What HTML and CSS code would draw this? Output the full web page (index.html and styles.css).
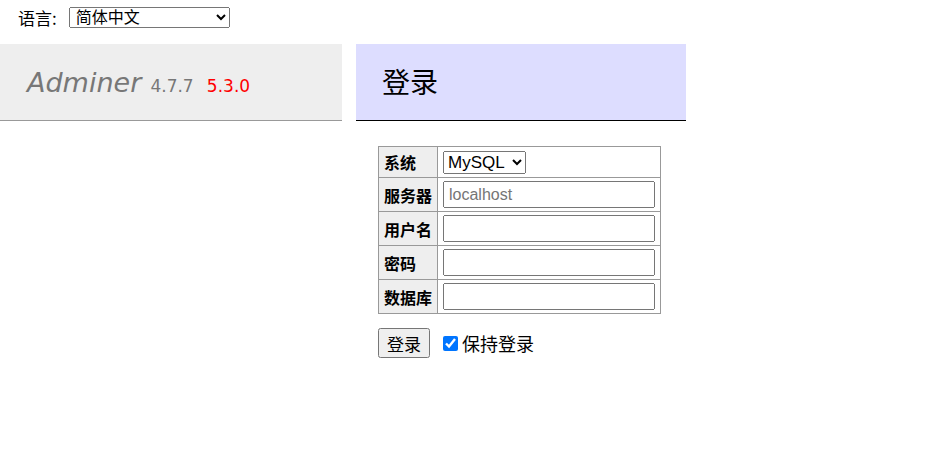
FILE: index.html
```html
<!DOCTYPE html>
<html lang="zh-CN">
<head>
<meta charset="utf-8">
<title>登录 - Adminer</title>
<link rel="stylesheet" href="styles.css">
</head>
<body>
<form class="lang">
  <label class="lang-label">语言: <select class="lang-select"><option>简体中文</option></select></label>
</form>
<div class="main">
  <div class="menu">
    <h1 class="logo"><span class="logo-name">Adminer</span> <span class="ver">4.7.7</span> <span class="ver-new">5.3.0</span></h1>
  </div>
  <div class="content">
    <h2 class="title">登录</h2>
    <form class="login">
      <table class="grid">
        <tr><th>系统</th><td><select class="driver"><option>MySQL</option></select></td></tr>
        <tr><th>服务器</th><td><input class="field" placeholder="localhost"></td></tr>
        <tr><th>用户名</th><td><input class="field"></td></tr>
        <tr><th>密码</th><td><input class="field" type="password"></td></tr>
        <tr><th>数据库</th><td><input class="field"></td></tr>
      </table>
      <div class="actions">
        <button type="button" class="btn">登录</button>
        <label class="remember"><input type="checkbox" class="check" checked>保持登录</label>
      </div>
    </form>
  </div>
</div>
</body>
</html>
```
FILE: styles.css
```css
body {
  margin: 0;
  font-family: "DejaVu Sans", "Noto Sans CJK SC", sans-serif;
  font-size: 16px;
  color: #000;
  background: #fff;
}
.lang {
  height: 44px;
  box-sizing: border-box;
  padding: 7px 18px 0;
}
.lang-label {
  display: flex;
  align-items: center;
  font-family: "Noto Sans CJK SC", sans-serif;
  font-size: 17px;
  line-height: 21px;
  gap: 12px;
}
.lang-select {
  width: 161px;
  height: 21px;
  font-family: "Liberation Sans", "Noto Sans CJK SC", sans-serif;
  font-size: 16px;
  line-height: 16px;
  padding: 0 0 0 2px;
  margin: 0;
  box-sizing: border-box;
}
.main {
  display: flex;
  align-items: flex-start;
}
.menu {
  width: 342px;
}
.logo {
  margin: 0;
  height: 77px;
  box-sizing: border-box;
  padding: 18px 27px 0;
  background: #eee;
  border-bottom: 1px solid #999;
  font-weight: normal;
  color: #777;
}
.logo-name {
  font-style: italic;
  font-size: 27px;
  font-family: "DejaVu Sans", sans-serif;
}
.ver {
  font-size: 17px;
  color: #777;
  margin-left: -1px;
}
.ver-new {
  font-size: 17px;
  color: red;
  margin-left: 3px;
}
.content {
  margin-left: 14px;
}
.title {
  margin: 0;
  width: 330px;
  height: 77px;
  box-sizing: border-box;
  padding: 17px 26px 0;
  background: #ddf;
  border-bottom: 1px solid #000;
  font-weight: normal;
  font-size: 28px;
  font-family: "Noto Sans CJK SC", sans-serif;
}
.login {
  padding: 25px 0 0 22px;
}
.grid {
  border-collapse: collapse;
  border: 1px solid #999;
}
.grid th, .grid td {
  border: 1px solid #999;
  padding: 3px 5px;
}
.grid th {
  background: #eee;
  text-align: left;
  font-family: "Noto Sans CJK SC", sans-serif;
  font-size: 16px;
  font-weight: bold;
  padding: 0 5px 0 5px;
}
.driver {
  font-family: "Liberation Sans", sans-serif;
  font-size: 17px;
  height: 23px;
  width: 83px;
  margin: 1px 0 0;
  padding: 0;
  display: block;
}
.field {
  width: 212px;
  height: 27px;
  box-sizing: border-box;
  font-family: "Liberation Sans", sans-serif;
  font-size: 16px;
  padding: 1px 4px;
  margin: 0;
  display: block;
}
.field::placeholder {
  color: #757575;
}
.actions {
  display: flex;
  align-items: center;
  margin-top: 14px;
}
.btn {
  width: 52px;
  height: 30px;
  font-family: "Noto Sans CJK SC", sans-serif;
  font-size: 17px;
  padding: 0;
}
.remember {
  display: flex;
  align-items: center;
  margin-left: 12px;
  font-family: "Noto Sans CJK SC", sans-serif;
  font-size: 18px;
}
.check {
  width: 15px;
  height: 15px;
  margin: 0 4px 0 1px;
}
```
